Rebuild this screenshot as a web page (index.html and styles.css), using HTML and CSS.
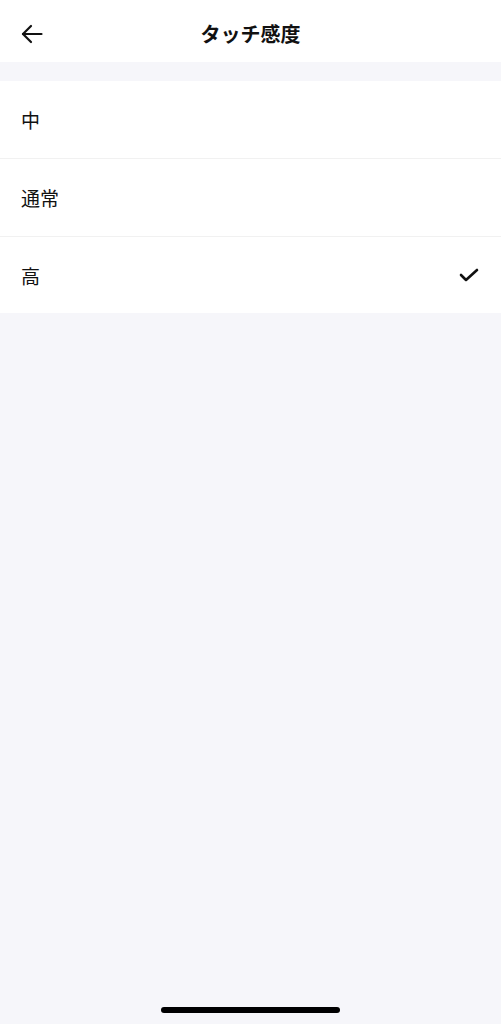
FILE: index.html
```html
<!DOCTYPE html>
<html lang="ja">
<head>
<meta charset="utf-8">
<title>タッチ感度</title>
<link rel="stylesheet" href="styles.css">
</head>
<body>
<div class="screen">
  <header class="header">
    <button class="back" aria-label="戻る">
      <svg width="22" height="20" viewBox="0 0 22 20" fill="none" stroke="#111" stroke-width="2.2" stroke-linecap="round" stroke-linejoin="round">
        <path d="M20.5 10H2"/>
        <path d="M10 2L2 10L10 18"/>
      </svg>
    </button>
    <h1 class="title">タッチ感度</h1>
  </header>
  <div class="gap"></div>
  <ul class="list">
    <li class="row"><span>中</span></li>
    <li class="row"><span>通常</span></li>
    <li class="row selected"><span>高</span>
      <svg class="check" width="20" height="14" viewBox="0 0 20 14" fill="none" stroke="#111" stroke-width="2.6" stroke-linecap="round" stroke-linejoin="round">
        <path d="M2 7L7 12L18 2"/>
      </svg>
    </li>
  </ul>
  <div class="home-indicator"></div>
</div>
</body>
</html>
```
FILE: styles.css
```css
* { box-sizing: border-box; }
html, body {
  margin: 0;
  padding: 0;
  background: #f6f6fa;
}
body {
  font-family: "Noto Sans CJK JP", "Noto Sans", sans-serif;
  color: #111;
}
.screen {
  width: 501px;
  height: 1024px;
  position: relative;
  display: flex;
  flex-direction: column;
}
.header {
  height: 62px;
  padding-top: 6px;
  background: #fff;
  display: flex;
  align-items: center;
  justify-content: center;
  position: relative;
}
.back {
  position: absolute;
  left: 21px;
  top: 24px;
  padding: 0;
  border: 0;
  background: none;
  display: flex;
}
.title {
  margin: 0;
  font-size: 20px;
  font-weight: 700;
  line-height: 1;
}
.gap {
  height: 19px;
}
.list {
  list-style: none;
  margin: 0;
  padding: 0;
  background: #fff;
}
.row {
  height: 78px;
  display: flex;
  align-items: center;
  justify-content: space-between;
  padding: 0 22px 0 21px;
  font-size: 19px;
  border-bottom: 1px solid #f1f1f1;
}
.row:last-child {
  height: 76px;
  border-bottom: 0;
}
.row span {
  line-height: 1;
}
.home-indicator {
  position: absolute;
  left: 161px;
  bottom: 11px;
  width: 179px;
  height: 6px;
  border-radius: 3px;
  background: #000;
}
```
